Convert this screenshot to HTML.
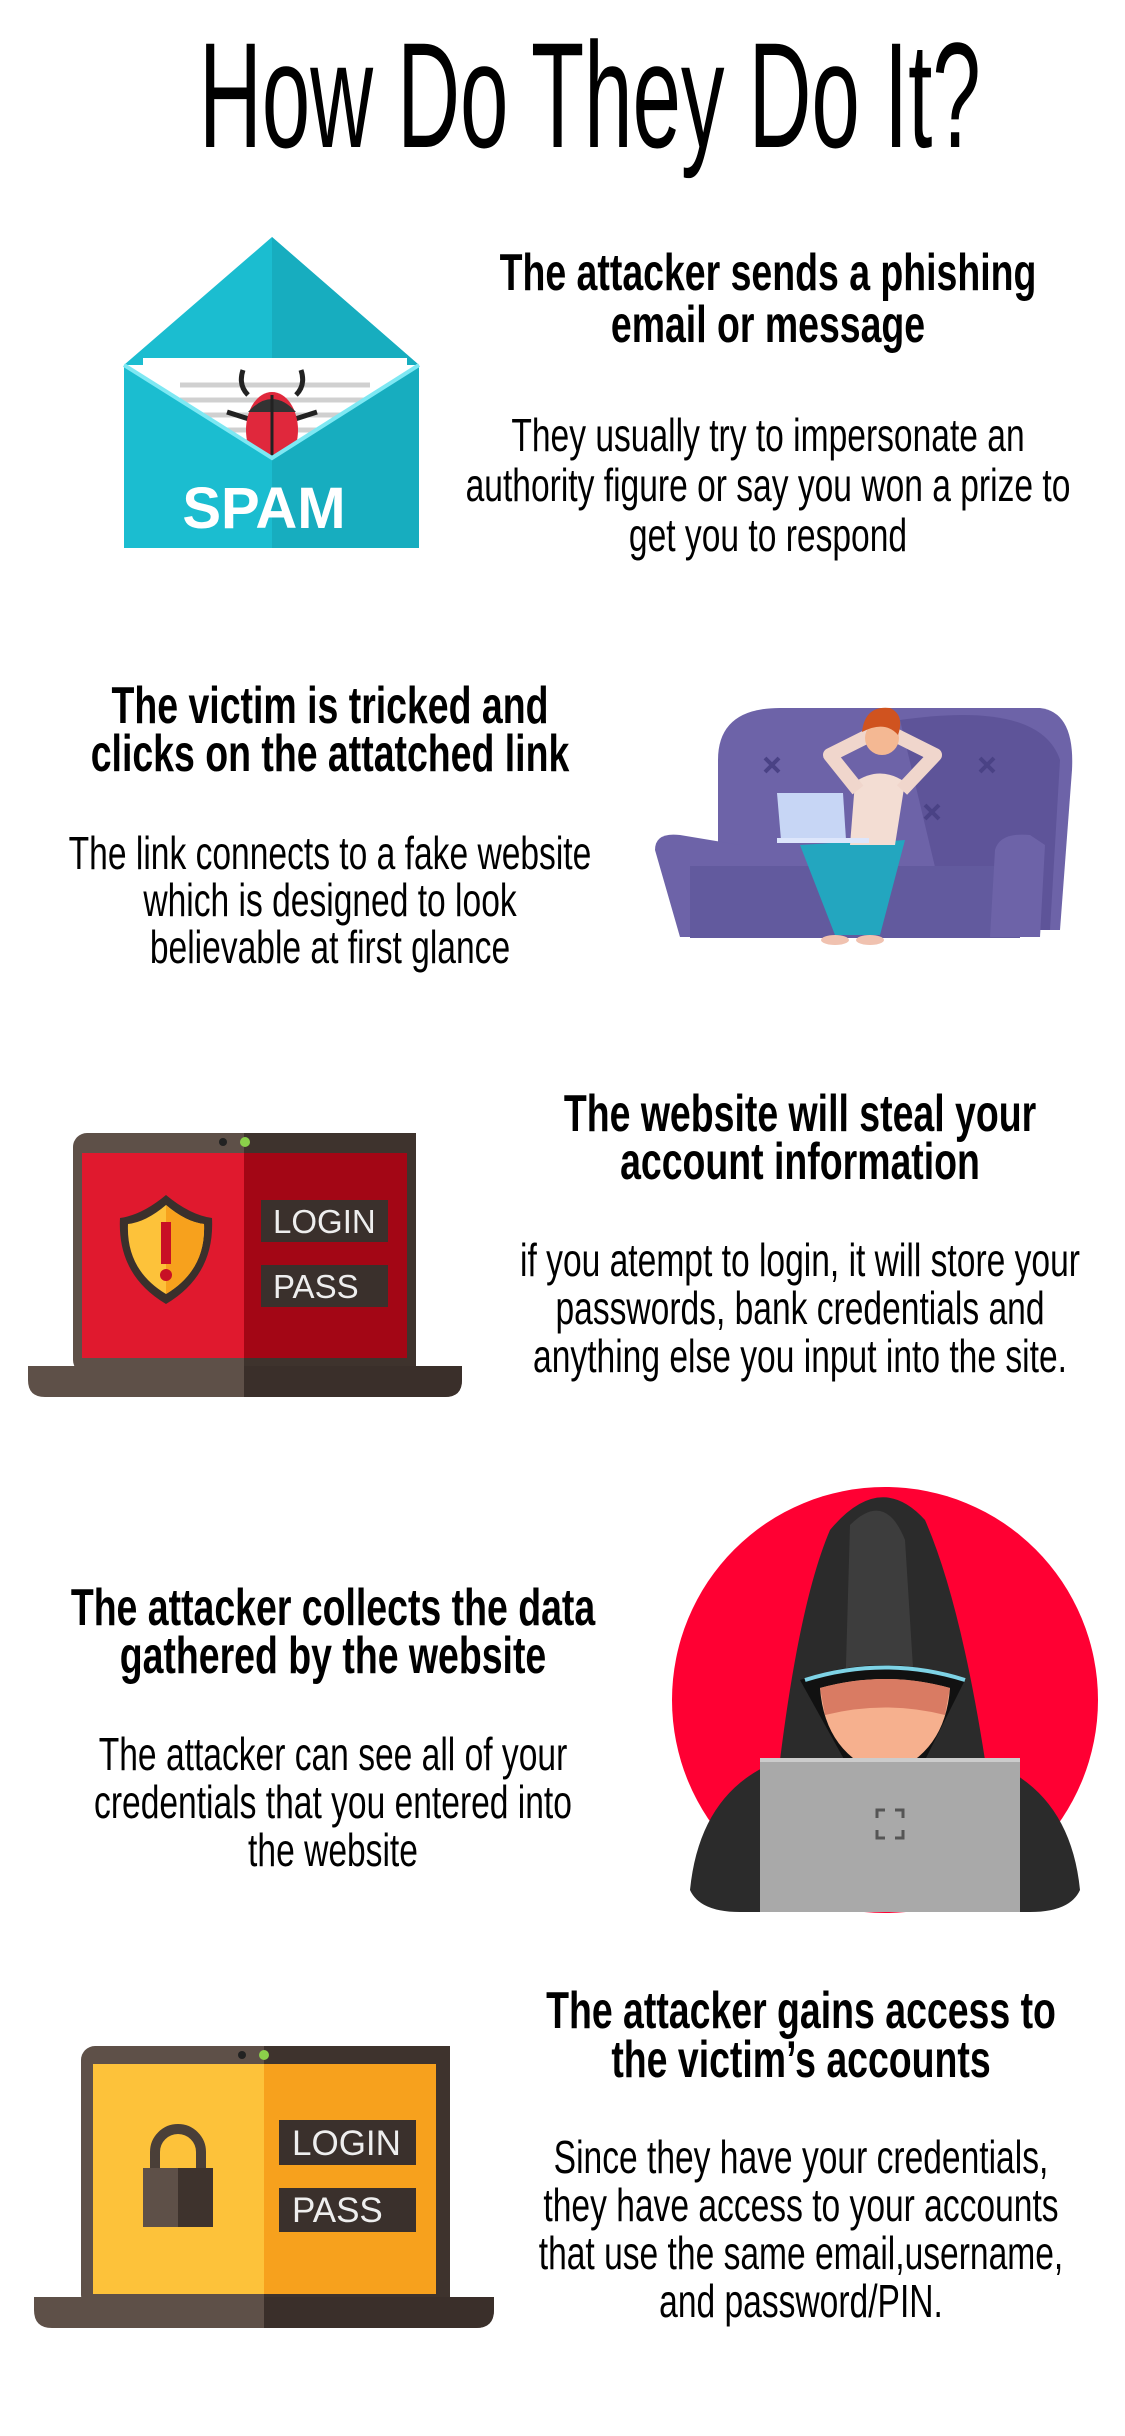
<!DOCTYPE html>
<html><head><meta charset="utf-8"><style>
html,body{margin:0;padding:0;background:#fff;}
body{width:1125px;height:2436px;position:relative;overflow:hidden;font-family:"Liberation Sans Narrow","Liberation Sans",sans-serif;color:#000;}
.t{position:absolute;white-space:nowrap;text-align:center;width:1200px;transform-origin:50% 0;}
.h{font-weight:bold;font-size:52px;}
.b{font-size:46px;}
svg{position:absolute;left:0;top:0;}
</style></head><body>
<svg width="1125" height="2436" viewBox="0 0 1125 2436">
<!-- SPAM envelope -->
<polygon points="272,237 124,365 419,365" fill="#1bbdd0"/>
<polygon points="272,237 272,365 419,365" fill="#17adbf"/>
<rect x="143" y="358" width="264" height="120" fill="#fff"/>
<g stroke="#d0d0d0" stroke-width="5"><line x1="180" y1="385" x2="370" y2="385"/><line x1="180" y1="400" x2="370" y2="400"/><line x1="180" y1="415" x2="370" y2="415"/><line x1="190" y1="430" x2="360" y2="430"/></g>
<g stroke="#222" stroke-width="5" fill="none"><path d="M248,395 q-10,-10 -5,-25"/><path d="M296,395 q10,-10 5,-25"/><path d="M252,420 l-25,-8"/><path d="M292,420 l25,-8"/><path d="M252,440 l-22,10"/><path d="M292,440 l22,10"/></g>
<ellipse cx="272" cy="430" rx="26" ry="38" fill="#e0283c"/>
<path d="M248,412 q24,-26 48,0 z" fill="#333"/>
<line x1="272" y1="395" x2="272" y2="468" stroke="#222" stroke-width="3"/>
<polygon points="124,365 272,458 419,365 419,548 124,548" fill="#1bbdd0"/>
<polygon points="272,458 419,365 419,548 272,548" fill="#17adbf"/>
<polyline points="124,365 272,458 419,365" fill="none" stroke="#7ee8f3" stroke-width="4"/>
<text x="264" y="528" font-family="Liberation Sans" font-weight="bold" font-size="58" fill="#fff" text-anchor="middle">SPAM</text>
<!-- couch -->
<path d="M718,930 L718,760 Q718,708 780,708 L1040,708 Q1075,712 1072,770 L1060,930 Z" fill="#6d63a8"/>
<path d="M900,720 Q1040,700 1060,760 L1050,930 L950,930 Z" fill="#5e5499"/>
<path d="M655,850 Q655,832 680,835 L740,845 L740,937 L680,937 Z" fill="#6d63a8"/>
<rect x="690" y="866" width="330" height="72" fill="#625a9e"/>
<path d="M995,850 Q1000,832 1030,835 L1045,845 L1040,937 L990,937 Z" fill="#6d63a8"/>
<g stroke="#4a4285" stroke-width="4"><path d="M765,758 l14,14 M779,758 l-14,14"/><path d="M980,758 l14,14 M994,758 l-14,14"/><path d="M925,805 l14,14 M939,805 l-14,14"/></g>
<path d="M800,845 L880,840 L860,935 L835,935 Z M840,845 L905,840 L880,935 L858,935 Z" fill="#23a6bf"/>
<path d="M855,782 Q880,765 905,782 L895,845 L850,845 Z" fill="#f3ddd3"/>
<path d="M858,790 L830,755 L870,735 M902,790 L935,755 L895,735" stroke="#f0d6cc" stroke-width="14" fill="none" stroke-linejoin="round"/>
<circle cx="882" cy="738" r="17" fill="#f4b893"/>
<path d="M862,732 Q865,705 890,708 Q905,715 898,735 Q885,720 862,732" fill="#d0531f"/>
<polygon points="777,793 843,793 846,840 781,840" fill="#c7d6f5"/>
<rect x="777" y="838" width="92" height="5" fill="#dde6fb"/>
<ellipse cx="835" cy="940" rx="14" ry="5" fill="#f0c2b0"/><ellipse cx="870" cy="940" rx="14" ry="5" fill="#f0c2b0"/>
<!-- laptop 1 -->
<rect x="73" y="1133" width="343" height="241" rx="14" fill="#5e5048"/>
<rect x="244" y="1133" width="172" height="241" fill="#3e332d"/>
<rect x="82" y="1153" width="162" height="205" fill="#e0192e"/>
<rect x="244" y="1153" width="163" height="205" fill="#a30615"/>
<circle cx="223" cy="1142" r="4" fill="#222"/><circle cx="245" cy="1142" r="5" fill="#8bd14a"/>
<path d="M28,1366 L462,1366 L462,1380 Q462,1397 445,1397 L45,1397 Q28,1397 28,1380 Z" fill="#5e5048"/>
<path d="M244,1366 L462,1366 L462,1380 Q462,1397 445,1397 L244,1397 Z" fill="#3a2f2a"/>
<rect x="261" y="1200" width="127" height="42" fill="#3a302c"/>
<rect x="261" y="1265" width="127" height="42" fill="#3a302c"/>
<text x="273" y="1233" font-family="Liberation Sans" font-size="33" fill="#eee">LOGIN</text>
<text x="273" y="1298" font-family="Liberation Sans" font-size="33" fill="#eee">PASS</text>
<path d="M166,1195 Q190,1215 212,1218 Q215,1275 166,1304 Q117,1275 120,1218 Q142,1215 166,1195 Z" fill="#3a302c"/>
<path d="M166,1205 Q186,1222 204,1224 Q206,1270 166,1294 Q126,1270 128,1224 Q146,1222 166,1205 Z" fill="#fdc23a"/>
<path d="M166,1205 Q186,1222 204,1224 Q206,1270 166,1294 Z" fill="#f7a11d"/>
<rect x="161" y="1222" width="10" height="42" fill="#c81025"/><circle cx="166" cy="1275" r="6" fill="#c81025"/>
<!-- hacker -->
<circle cx="885" cy="1700" r="213" fill="#ff0033"/>
<path d="M690,1890 Q700,1790 780,1760 Q800,1600 830,1530 Q880,1470 925,1520 Q960,1600 985,1760 Q1070,1790 1080,1890 Q1070,1912 1030,1912 L740,1912 Q700,1912 690,1890 Z" fill="#2b2b2b"/>
<path d="M850,1525 Q885,1490 905,1540 L915,1700 L845,1700 Z" fill="#3d3d3d"/>
<path d="M800,1680 Q885,1650 965,1680 L920,1770 L850,1770 Z" fill="#111"/>
<path d="M805,1680 Q885,1655 965,1680" stroke="#7ed3e6" stroke-width="4" fill="none"/>
<path d="M820,1688 Q885,1670 950,1688 Q945,1755 885,1775 Q825,1755 820,1688 Z" fill="#f6b08e"/>
<path d="M820,1688 Q885,1670 950,1688 L945,1715 Q885,1700 825,1715 Z" fill="#d97b63"/>
<rect x="760" y="1758" width="260" height="154" fill="#a9a9a9"/>
<rect x="760" y="1758" width="260" height="4" fill="#ccc"/>
<path d="M877,1818 v-8 h8 M895,1810 h8 v8 M877,1830 v8 h8 M895,1838 h8 v-8" stroke="#555" stroke-width="3" fill="none"/>
<!-- laptop 2 -->
<rect x="81" y="2046" width="369" height="263" rx="14" fill="#5e5048"/>
<rect x="264" y="2046" width="186" height="263" fill="#3e332d"/>
<rect x="93" y="2064" width="171" height="230" fill="#fdc23a"/>
<rect x="264" y="2064" width="172" height="230" fill="#f7a11d"/>
<circle cx="242" cy="2055" r="4" fill="#222"/><circle cx="264" cy="2055" r="5" fill="#8bd14a"/>
<path d="M34,2297 L494,2297 L494,2310 Q494,2328 476,2328 L52,2328 Q34,2328 34,2310 Z" fill="#5e5048"/>
<path d="M264,2297 L494,2297 L494,2310 Q494,2328 476,2328 L264,2328 Z" fill="#3a2f2a"/>
<rect x="279" y="2120" width="137" height="45" fill="#3a302c"/>
<rect x="279" y="2188" width="137" height="44" fill="#3a302c"/>
<text x="292" y="2155" font-family="Liberation Sans" font-size="35" fill="#eee">LOGIN</text>
<text x="292" y="2222" font-family="Liberation Sans" font-size="35" fill="#eee">PASS</text>
<path d="M155,2170 v-18 a23,23 0 0 1 46,0 v18" stroke="#4a3f38" stroke-width="10" fill="none"/>
<rect x="143" y="2168" width="70" height="59" fill="#5e5048"/>
<rect x="178" y="2168" width="35" height="59" fill="#3e332d"/>
</svg>

<div class="t" style="left:-53px;top:20px;font-size:150px;line-height:150px;transform:scaleX(0.58);">How Do They Do It?</div>

<div class="t h" style="left:168px;top:247px;line-height:52px;transform:scaleX(0.72);">The attacker sends a phishing<br>email or message</div>
<div class="t b" style="left:168px;top:410px;line-height:50px;transform:scaleX(0.73);">They usually try to impersonate an<br>authority figure or say you won a prize to<br>get you to respond</div>

<div class="t h" style="left:-270px;top:682px;line-height:48px;transform:scaleX(0.72);">The victim is tricked and<br>clicks on the attatched link</div>
<div class="t b" style="left:-270px;top:830px;line-height:47px;transform:scaleX(0.73);">The link connects to a fake website<br>which is designed to look<br>believable at first glance</div>

<div class="t h" style="left:200px;top:1090px;line-height:48px;transform:scaleX(0.72);">The website will steal your<br>account information</div>
<div class="t b" style="left:200px;top:1236px;line-height:48px;transform:scaleX(0.73);">if you atempt to login, it will store your<br>passwords, bank credentials and<br>anything else you input into the site.</div>

<div class="t h" style="left:-267px;top:1584px;line-height:48px;transform:scaleX(0.72);">The attacker collects the data<br>gathered by the website</div>
<div class="t b" style="left:-267px;top:1730px;line-height:48px;transform:scaleX(0.73);">The attacker can see all of your<br>credentials that you entered into<br>the website</div>

<div class="t h" style="left:201px;top:1987px;line-height:49px;transform:scaleX(0.72);">The attacker gains access to<br>the victim’s accounts</div>
<div class="t b" style="left:201px;top:2133px;line-height:48px;transform:scaleX(0.73);">Since they have your credentials,<br>they have access to your accounts<br>that use the same email,username,<br>and password/PIN.</div>
</body></html>
